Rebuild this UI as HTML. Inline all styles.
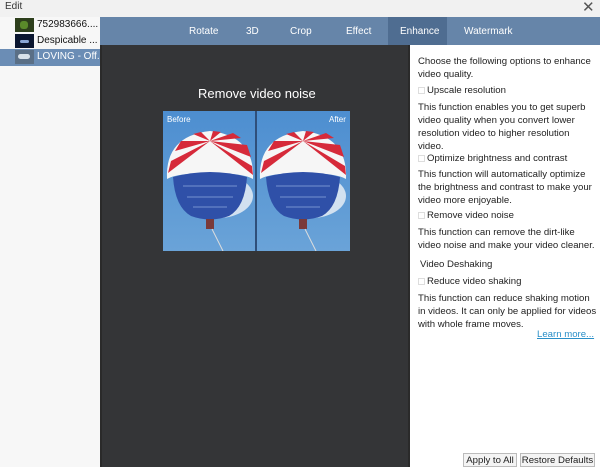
<!DOCTYPE html>
<html><head><meta charset="utf-8"><style>
*{margin:0;padding:0;box-sizing:border-box}
body{width:600px;height:467px;overflow:hidden;background:#fff;font-family:"Liberation Sans",sans-serif;position:relative}
.a{position:absolute;white-space:nowrap}
.r{font-size:9.6px;color:#222;left:418px}
.cb{display:inline-block;width:7px;height:7px;border:1px solid #ddd;margin-right:2px;vertical-align:-1px;background:#fff}
</style></head><body>
<div class="a" style="left:0;top:0;width:600px;height:17px;background:#f1f1f1"></div>
<div class="a" style="left:5px;top:1px;font-size:10px;color:#333">Edit</div>
<div class="a" style="left:582px;top:-2px;font-size:15px;color:#555">✕</div>
<div class="a" style="left:0;top:17px;width:100px;height:450px;background:#f7f7f7"></div>
<div class="a" style="left:0;top:49px;width:100px;height:17px;background:#6b8db5"></div>
<div class="a" style="left:15px;top:18px;width:19px;height:14px;background:#2d3f1c"><div style="margin:3px 5px;width:8px;height:8px;background:#5a8a2a;border-radius:3px"></div></div>
<div class="a" style="left:15px;top:34px;width:19px;height:14px;background:#0b1630"><div style="margin:6px 5px;width:9px;height:3px;background:#8aa6d6;border-radius:2px"></div></div>
<div class="a" style="left:15px;top:50px;width:19px;height:14px;background:#5a6f86"><div style="margin:4px 3px;width:12px;height:5px;background:#d8e2ea;border-radius:3px"></div></div>
<div class="a" style="left:37px;top:19px;font-size:10px;color:#111">752983666....</div>
<div class="a" style="left:37px;top:35px;font-size:10px;color:#111">Despicable ...</div>
<div class="a" style="left:37px;top:51px;font-size:10px;color:#fff">LOVING - Off...</div>
<div class="a" style="left:100px;top:17px;width:500px;height:28px;background:#6685a9"></div>
<div class="a" style="left:388px;top:17px;width:59px;height:28px;background:#4f6d91"></div>
<div class="a" style="left:189px;top:26px;font-size:10px;color:#fff">Rotate</div>
<div class="a" style="left:246px;top:26px;font-size:10px;color:#fff">3D</div>
<div class="a" style="left:290px;top:26px;font-size:10px;color:#fff">Crop</div>
<div class="a" style="left:346px;top:26px;font-size:10px;color:#fff">Effect</div>
<div class="a" style="left:400px;top:26px;font-size:10px;color:#fff">Enhance</div>
<div class="a" style="left:464px;top:26px;font-size:10px;color:#fff">Watermark</div>
<div class="a" style="left:100px;top:45px;width:310px;height:422px;background:#343537;border-left:2px solid #2a2a2a;border-right:2px solid #2a2a2a"></div>
<div class="a" style="left:410px;top:45px;width:190px;height:422px;background:#fff"></div>
<div class="a" style="left:198px;top:86px;font-size:13px;color:#fff">Remove video noise</div>
<svg class="a" style="left:163px;top:111px" width="187" height="140" viewBox="0 0 187 140">
<defs><linearGradient id="s" x1="0" y1="0" x2="0" y2="1"><stop offset="0" stop-color="#4d8ed0"/><stop offset="1" stop-color="#6aa3d8"/></linearGradient></defs>
<rect width="187" height="140" fill="url(#s)"/>
<g id="p"><ellipse cx="55" cy="85" rx="35" ry="22" fill="#e6edf5" opacity=".85"/>
<path d="M4 68 Q2 25 47 20 Q92 25 90 68 Q80 62 47 62 Q14 62 4 68Z" fill="#f6f6f6"/>
<path d="M47 30 L8 50 L5 62 Z M47 30 L18 30 L12 40Z M47 30 L38 21 L30 23Z M47 30 L58 21 L50 20Z M47 30 L78 27 L70 22Z M47 30 L88 46 L84 34Z M47 30 L90 64 L89 55Z" fill="#d62a3a"/>
<path d="M10 66 Q47 56 84 66 Q82 96 66 105 Q47 112 28 105 Q12 96 10 66Z" fill="#2f50a8"/>
<path d="M20 75 H74 M24 86 H70 M30 96 H64" stroke="#8fa8dd" stroke-width=".8"/>
<rect x="43" y="108" width="8" height="10" fill="#7a3a3a"/>
<path d="M49 118 L60 140" stroke="#ddd" stroke-width="1"/></g>
<use href="#p" x="93"/>
<rect x="92" y="0" width="2" height="140" fill="#2f4f7a"/>
<text x="4" y="11" font-size="8" fill="#fff" font-family="Liberation Sans">Before</text>
<text x="166" y="11" font-size="8" fill="#fff" font-family="Liberation Sans">After</text>
</svg>
<div class="a r" style="top:56px">Choose the following options to enhance</div>
<div class="a r" style="top:69px">video quality.</div>
<div class="a r" style="top:85px"><span class="cb"></span>Upscale resolution</div>
<div class="a r" style="top:102px">This function enables you to get superb</div>
<div class="a r" style="top:115px">video quality when you convert lower</div>
<div class="a r" style="top:128px">resolution video to higher resolution</div>
<div class="a r" style="top:141px">video.</div>
<div class="a r" style="top:153px"><span class="cb"></span>Optimize brightness and contrast</div>
<div class="a r" style="top:169px">This function will automatically optimize</div>
<div class="a r" style="top:182px">the brightness and contrast to make your</div>
<div class="a r" style="top:195px">video more enjoyable.</div>
<div class="a r" style="top:210px"><span class="cb"></span>Remove video noise</div>
<div class="a r" style="top:227px">This function can remove the dirt-like</div>
<div class="a r" style="top:240px">video noise and make your video cleaner.</div>
<div class="a r" style="top:259px;left:420px">Video Deshaking</div>
<div class="a r" style="top:276px"><span class="cb"></span>Reduce video shaking</div>
<div class="a r" style="top:293px">This function can reduce shaking motion</div>
<div class="a r" style="top:306px">in videos. It can only be applied for videos</div>
<div class="a r" style="top:319px">with whole frame moves.</div>
<div class="a r" style="top:329px;left:537px;color:#2a8fc8;text-decoration:underline">Learn more...</div>
<div class="a" style="left:463px;top:453px;width:54px;height:14px;border:1px solid #bbb;background:#f4f4f4;font-size:9.6px;color:#222;text-align:center;line-height:13px">Apply to All</div>
<div class="a" style="left:520px;top:453px;width:75px;height:14px;border:1px solid #bbb;background:#f4f4f4;font-size:9.6px;color:#222;text-align:center;line-height:13px">Restore Defaults</div>
</body></html>
